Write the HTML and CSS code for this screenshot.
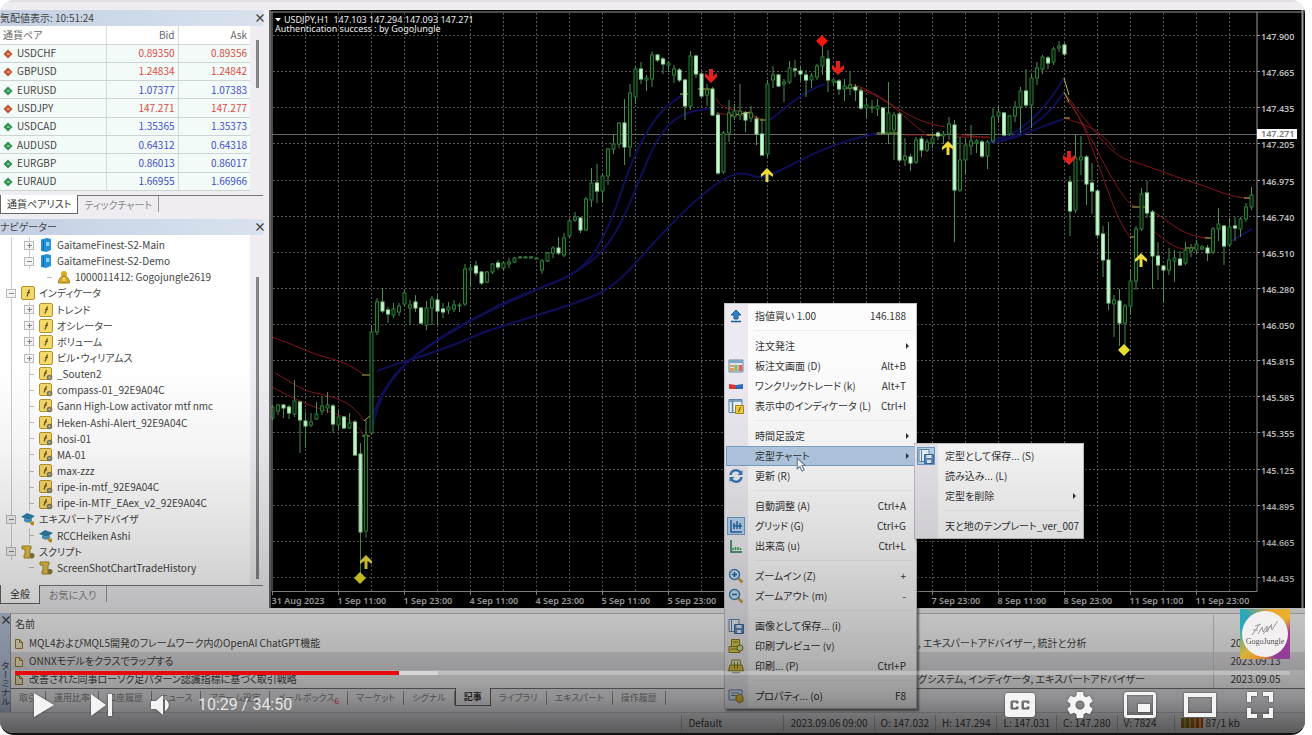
FILE: index.html
```html
<!DOCTYPE html>
<html lang="ja">
<head>
    <meta charset="UTF-8">
    <meta name="viewport" content="width=device-width, initial-scale=1.0">
    <title>USDJPY,H1</title>
    <link rel="stylesheet" href="styles.css">
</head>
<body>
    <svg class="defs" aria-hidden="true">
        <symbol id="i-pair" viewBox="0 0 10 10"><path d="M5 0.5 9.5 5 5 9.5 0.500 5z" fill="currentColor"/><path d="M4 5h3M5 4v2" stroke="#fff" stroke-opacity=".5"/></symbol>
        <symbol id="i-server" viewBox="0 0 14 14"><path d="M2 1.500l6-1.500 4 1v11l-5 2-5-1z" fill="#2490d8"/><path d="M4.500 2.500v10" stroke="#0d5f9f"/><path d="M7 4h3.500v4H7z" fill="#86cdf5"/></symbol>
        <symbol id="i-user" viewBox="0 0 14 14"><circle cx="7" cy="4" r="3" fill="#d9ac22"/><path d="M1.500 13c0-9 11-9 11 0z" fill="#d9ac22" stroke="#9c7a12"/><path d="M6 7h2v4H6z" fill="#f6e27a"/></symbol>
        <symbol id="i-func" viewBox="0 0 14 14"><rect x=".5" y=".5" width="13" height="13" rx="1.500" fill="#f3d96b" stroke="#b8922a"/><path d="M8.500 3.500 6 10.500M6 6.500h3" fill="none" stroke="#6b4a10" stroke-width="1.200"/></symbol>
        <symbol id="i-custom" viewBox="0 0 14 14"><rect x=".5" y=".5" width="12" height="12" rx="1.500" fill="#f3d96b" stroke="#b8922a"/><path d="M7.500 3 5 9.500M5 6h3" fill="none" stroke="#6b4a10" stroke-width="1.200"/><circle cx="10.500" cy="10.500" r="2.800" fill="#7d7758"/><circle cx="10.500" cy="10.500" r="1" fill="#d8d0a0"/></symbol>
        <symbol id="i-expert" viewBox="0 0 14 14"><path d="M0 5 6 1l8 3-6 4z" fill="#2e7fa8"/><path d="M3 6v3c2 2 6 2 8 0V6L8 8z" fill="#4aa0c6"/><path d="M9 10l3 3M12 9.500v3.500" stroke="#c09a20" stroke-width="2"/></symbol>
        <symbol id="i-script" viewBox="0 0 14 14"><path d="M1 1h9v3H9v5h3v4H3v-3h1V4H1z" fill="#e2c04a" stroke="#a98722"/><circle cx="11" cy="10.500" r="2.500" fill="#8d7a3a"/></symbol>
        <symbol id="i-doc" viewBox="0 0 8 10"><path d="M.5.5h4l3 3v6h-7z" fill="#f7edc8" stroke="#a08030"/><path d="M4.500.5v3h3" fill="none" stroke="#a08030"/></symbol>
        <symbol id="i-up" viewBox="0 0 16 16"><path d="M8 2l5 5h-3v4H6V7H3z" fill="#2f7fc4" stroke="#1b5c98"/><path d="M3 13.500h10" stroke="#1b5c98" stroke-width="1.500"/></symbol>
        <symbol id="i-board" viewBox="0 0 16 16"><path d="M1 2h14v12H1z" fill="#d9e4ec" stroke="#6c8aa0"/><path d="M1 2h14v3H1z" fill="#7fa6be"/><path d="M2 7h4v2H2zM2 10h4v3H2z" fill="#e39a5a"/><path d="M6.500 7h3v6h-3z" fill="#7fba6a"/><path d="M10.500 7h4v6h-4z" fill="#d86a60"/></symbol>
        <symbol id="i-oneclick" viewBox="0 0 16 16"><path d="M1 6l7 1v4H1z" fill="#d63838"/><path d="M15 6 8 7v4h7z" fill="#2f6cb8"/></symbol>
        <symbol id="i-list" viewBox="0 0 16 16"><path d="M1 1.500h13v13H1z" fill="#eef4f9" stroke="#5c86ae"/><path d="M1 3h13M4.500 3v11" stroke="#5c86ae" stroke-width="1.500"/><path d="M7.500 7.500h8v8h-8z" fill="#f1cf3c" stroke="#a8861c"/><path d="M12.500 9l-2 5" stroke="#6b4a10"/></symbol>
        <symbol id="i-refresh" viewBox="0 0 16 16"><path d="M2.500 7c.5-5 7-6.500 10-2.500M13.500 9c-.5 5-7 6.500-10 2.500" fill="none" stroke="#3978b4" stroke-width="2.500"/><path d="M14.500 2v5h-5zM1.500 14V9h5z" fill="#3978b4"/></symbol>
        <symbol id="i-grid" viewBox="0 0 16 16"><path d="M3 2v12h11M6 5v6M9 3v8M12 5v6M5 8h9" fill="none" stroke="#2668a5" stroke-width="1.500"/></symbol>
        <symbol id="i-volume" viewBox="0 0 16 16"><path d="M3 2v12h11" fill="none" stroke="#2b7550" stroke-width="1.500"/><path d="M5 12v-2M7.500 12V9M10 12v-3M12.500 12v-2" stroke="#35a04c" stroke-width="1.500"/></symbol>
        <symbol id="i-zoomin" viewBox="0 0 16 16"><path d="M10 10l4.500 4.500" stroke="#c79a3c" stroke-width="2.500"/><circle cx="6.500" cy="6.500" r="5" fill="#cfe6f6" stroke="#3b82b8" stroke-width="1.500"/><path d="M4 6.500h5M6.500 4v5" stroke="#1f619a" stroke-width="1.500"/></symbol>
        <symbol id="i-zoomout" viewBox="0 0 16 16"><path d="M10 10l4.500 4.500" stroke="#c79a3c" stroke-width="2.500"/><circle cx="6.500" cy="6.500" r="5" fill="#cfe6f6" stroke="#3b82b8" stroke-width="1.500"/><path d="M4 6.500h5" stroke="#1f619a" stroke-width="1.500"/></symbol>
        <symbol id="i-save" viewBox="0 0 16 16"><path d="M1 1.500h10v12H1z" fill="#eef4f9" stroke="#5c86ae"/><path d="M3.500 2v11" stroke="#5c86ae"/><path d="M6.500 6.500h9v9h-9z" fill="#5c8fc0" stroke="#3d6a98"/><path d="M8.500 7h5v3h-5zM9 12h4v3H9z" fill="#e3edf6"/></symbol>
        <symbol id="i-preview" viewBox="0 0 16 16"><path d="M3.500 1.500h8v7h-8zM1 8.500h11v6H1z" fill="#e0d052" stroke="#8c7e1c"/><path d="M5 4h5M3 11h6" stroke="#8c7e1c"/><circle cx="12" cy="10" r="3" fill="#d8e4a8" stroke="#7a7020"/></symbol>
        <symbol id="i-print" viewBox="0 0 16 16"><path d="M4 2h8l1 6H3z" fill="#f0ead0" stroke="#8c7e1c"/><path d="M2 7h12l1.500 6H.5z" fill="#d8c63e" stroke="#8c7e1c"/><path d="M4 14.500h8" stroke="#777" stroke-width="1.500"/><path d="M6.500 4v7M9.500 4v7" stroke="#8c7e1c"/></symbol>
        <symbol id="i-props" viewBox="0 0 16 16"><path d="M1 2h13v10H1z" fill="#dbe8f2" stroke="#5c86ae"/><path d="M3 5h8M3 7.500h5" stroke="#5c86ae"/><path d="M8 8l4-2 3 3v4l-4 2-3-3z" fill="#e0bd35" stroke="#96781c"/></symbol>
    </svg>

    <main class="player">
        <div class="toolbar"></div>

        <div class="workspace">
            <aside class="sidebar">
                <section class="panel">
                    <h2 class="panel-title">気配値表示: 10:51:24 <button class="close" aria-label="閉じる">×</button></h2>
                    <div class="panel-body">
                        <table class="quotes">
                            <thead>
                                <tr><th>通貨ペア</th><th>Bid</th><th>Ask</th></tr>
                            </thead>
                            <tbody>
                                <tr class="down"><td><svg><use href="#i-pair"/></svg>USDCHF</td><td>0.89350</td><td>0.89356</td></tr>
                                <tr class="down"><td><svg><use href="#i-pair"/></svg>GBPUSD</td><td>1.24834</td><td>1.24842</td></tr>
                                <tr class="up"><td><svg><use href="#i-pair"/></svg>EURUSD</td><td>1.07377</td><td>1.07383</td></tr>
                                <tr class="down"><td><svg><use href="#i-pair"/></svg>USDJPY</td><td>147.271</td><td>147.277</td></tr>
                                <tr class="up"><td><svg><use href="#i-pair"/></svg>USDCAD</td><td>1.35365</td><td>1.35373</td></tr>
                                <tr class="up"><td><svg><use href="#i-pair"/></svg>AUDUSD</td><td>0.64312</td><td>0.64318</td></tr>
                                <tr class="up"><td><svg><use href="#i-pair"/></svg>EURGBP</td><td>0.86013</td><td>0.86017</td></tr>
                                <tr class="up"><td><svg><use href="#i-pair"/></svg>EURAUD</td><td>1.66955</td><td>1.66966</td></tr>
                            </tbody>
                        </table>
                        <div class="scroll scroll-quotes"></div>
                    </div>
                    <div class="tabs">
                        <button class="tab active">通貨ペアリスト</button>
                        <button class="tab">ティックチャート</button>
                    </div>
                </section>

                <section class="panel navigator">
                    <h2 class="panel-title">ナビゲーター <button class="close" aria-label="閉じる">×</button></h2>
                    <div class="panel-body">
                        <ul class="tree">
                            <li class="l2"><i class="box plus"></i><svg><use href="#i-server"/></svg>GaitameFinest-S2-Main</li>
                            <li class="l2"><i class="box"></i><svg><use href="#i-server"/></svg>GaitameFinest-S2-Demo</li>
                            <li class="l3"><i class="leaf"></i><svg><use href="#i-user"/></svg>1000011412: Gogojungle2619</li>
                            <li class="l1"><i class="box"></i><svg><use href="#i-func"/></svg>インディケータ</li>
                            <li class="l2"><i class="box plus"></i><svg><use href="#i-func"/></svg>トレンド</li>
                            <li class="l2"><i class="box plus"></i><svg><use href="#i-func"/></svg>オシレーター</li>
                            <li class="l2"><i class="box plus"></i><svg><use href="#i-func"/></svg>ボリューム</li>
                            <li class="l2"><i class="box plus"></i><svg><use href="#i-func"/></svg>ビル・ウィリアムス</li>
                            <li class="l2"><i class="leaf"></i><svg><use href="#i-custom"/></svg>_Souten2</li>
                            <li class="l2"><i class="leaf"></i><svg><use href="#i-custom"/></svg>compass-01_92E9A04C</li>
                            <li class="l2"><i class="leaf"></i><svg><use href="#i-custom"/></svg>Gann High-Low activator mtf nmc</li>
                            <li class="l2"><i class="leaf"></i><svg><use href="#i-custom"/></svg>Heken-Ashi-Alert_92E9A04C</li>
                            <li class="l2"><i class="leaf"></i><svg><use href="#i-custom"/></svg>hosi-01</li>
                            <li class="l2"><i class="leaf"></i><svg><use href="#i-custom"/></svg>MA-01</li>
                            <li class="l2"><i class="leaf"></i><svg><use href="#i-custom"/></svg>max-zzz</li>
                            <li class="l2"><i class="leaf"></i><svg><use href="#i-custom"/></svg>ripe-in-mtf_92E9A04C</li>
                            <li class="l2"><i class="leaf"></i><svg><use href="#i-custom"/></svg>ripe-in-MTF_EAex_v2_92E9A04C</li>
                            <li class="l1"><i class="box"></i><svg><use href="#i-expert"/></svg>エキスパートアドバイザ</li>
                            <li class="l2"><i class="leaf"></i><svg><use href="#i-expert"/></svg>RCCHeiken Ashi</li>
                            <li class="l1"><i class="box"></i><svg><use href="#i-script"/></svg>スクリプト</li>
                            <li class="l2 last"><i class="leaf"></i><svg><use href="#i-script"/></svg>ScreenShotChartTradeHistory</li>
                        </ul>
                        <div class="scroll scroll-tree"></div>
                    </div>
                    <div class="tabs">
                        <button class="tab active">全般</button>
                        <button class="tab">お気に入り</button>
                    </div>
                </section>
            </aside>

            <svg class="chart" id="chart" viewBox="271 10 1034 598" role="img" aria-label="USDJPY,H1">
                <rect x="271" y="10" width="1034" height="598" fill="#000"/>
                <g id="grid" class="grid"></g>
                <path class="price-line" d="M272 134.500H1257"/>
                <g class="ma-blue">
                    <path d="M372 431C378 395 392 378 405 365S450 330 475 318 530 292 560 280 600 245 610 222 626 172 640 145 664 105 688 92"/>
                    <path d="M372 417C382 390 395 372 410 360S460 325 500 305 560 285 590 262 630 200 650 155 690 112 715 108"/>
                    <path d="M377 371C400 362 440 352 470 338S570 308 600 293 650 240 700 197 745 185 770 175 820 145 878 133"/>
                    <path d="M770 120C785 108 805 90 825 84"/>
                    <path d="M990 141C1020 136 1045 110 1064 78M990 143C1020 138 1048 118 1064 92M990 143C1020 139 1040 126 1064 119"/>
                    <path d="M1228 243 1252 229"/>
                </g>
                <g class="ma-red">
                    <path d="M272 337C295 345 310 353 325 357S350 364 364 375"/>
                    <path d="M275 373C290 381 300 390 315 393S352 400 364 421"/>
                    <path d="M272 387C285 394 300 402 315 407S355 417 364 436"/>
                    <path d="M716 98C724 115 740 106 760 119M716 113C735 116 748 113 762 120"/>
                    <path d="M850 84C885 92 900 120 945 127M858 89C890 97 905 120 925 133M905 135H945"/>
                    <path d="M955 134 990 138M955 137H990"/>
                    <path d="M1066 95C1090 125 1110 155 1128 160S1170 175 1195 183 1230 198 1250 198"/>
                    <path d="M1068 99C1095 140 1120 205 1137 207M1066 100C1090 120 1110 215 1130 237"/>
                    <path d="M1064 118C1090 126 1100 130 1115 150"/>
                    <path d="M1155 213C1170 222 1185 238 1210 238M1152 230C1165 240 1175 249 1185 249"/>
                </g>
                <g class="ma-yellow">
                    <path d="M362 375h8M364 421l7-6M362 436h8M680 94h8M698 89h12M730 116l20-4M760 120h8M832 81l8 2M845 88h12M877 133h24M927 135h18M1064 78l5 17M1064 92l5 10M1064 118h6M1132 207h14M1130 237h8M1205 238h8M1185 248h12M1244 198h9"/>
                </g>
                <g id="candles"></g>
                <g id="marks"></g>
                <path class="frame" d="M271 12H1302M272 12V591.500H1257V12"/>
                <g id="axis" class="axis"></g>
                <rect x="1257" y="129" width="40" height="10" fill="#fff"/>
                <text class="price-tag" x="1261" y="137">147.271</text>
                <path d="M275 18h6l-3 3.500z" fill="#fff"/>
                <text class="symbol" x="284" y="23">USDJPY,H1&#160; 147.103 147.294 147.093 147.271</text>
                <text class="symbol" x="275" y="32">Authentication success : by GogoJungle</text>
                <path d="M1302.500 10V608" stroke="#999" stroke-width="2"/>
            </svg>
        </div>

        <div class="terminal">
            <div class="grip"><button class="close" aria-label="閉じる">×</button><span>ターミナル</span></div>
            <div class="terminal-main">
                <table class="articles">
                    <thead>
                        <tr><th class="col-name">名前</th><th></th><th class="col-date"></th></tr>
                    </thead>
                    <tbody>
                        <tr><td><svg><use href="#i-doc"/></svg>MQL4およびMQL5開発のフレームワーク内のOpenAI ChatGPT機能</td><td>, エキスパートアドバイザー, 統計と分析</td><td>2023.09.14</td></tr>
                        <tr><td><svg><use href="#i-doc"/></svg>ONNXモデルをクラスでラップする</td><td></td><td>2023.09.13</td></tr>
                        <tr><td><svg><use href="#i-doc"/></svg>改善された同事ローソク足パターン認識指標に基づく取引戦略</td><td>グシステム, インディケータ, エキスパートアドバイザー</td><td>2023.09.05</td></tr>
                    </tbody>
                </table>
                <div class="tabs">
                    <button class="tab">取引</button>
                    <button class="tab">運用比率</button>
                    <button class="tab">口座履歴</button>
                    <button class="tab">ニュース</button>
                    <button class="tab">アラーム設定</button>
                    <button class="tab">メールボックス<sub>6</sub></button>
                    <button class="tab">マーケット</button>
                    <button class="tab">シグナル</button>
                    <button class="tab active">記事</button>
                    <button class="tab">ライブラリ</button>
                    <button class="tab">エキスパート</button>
                    <button class="tab">操作履歴</button>
                </div>
            </div>
        </div>

        <div class="statusbar">
            <span class="profile">Default</span>
            <span>2023.09.06 09:00</span>
            <span>O: 147.032</span>
            <span>H: 147.294</span>
            <span>L: 147.031</span>
            <span>C: 147.280</span>
            <span>V: 7824</span>
            <span class="traffic"><i class="bars"></i>87/1 kb</span>
        </div>

        <div class="menu menu-chart">
            <button><svg><use href="#i-up"/></svg>指値買い 1.00<kbd>146.188</kbd></button>
            <hr>
            <button class="sub">注文発注</button>
            <button><svg><use href="#i-board"/></svg>板注文画面 (D)<kbd>Alt+B</kbd></button>
            <button><svg><use href="#i-oneclick"/></svg>ワンクリックトレード (k)<kbd>Alt+T</kbd></button>
            <button><svg><use href="#i-list"/></svg>表示中のインディケータ (L)<kbd>Ctrl+I</kbd></button>
            <hr>
            <button class="sub">時間足設定</button>
            <button class="sub selected">定型チャート</button>
            <button><svg><use href="#i-refresh"/></svg>更新 (R)</button>
            <hr>
            <button>自動調整 (A)<kbd>Ctrl+A</kbd></button>
            <button><svg class="on"><use href="#i-grid"/></svg>グリッド (G)<kbd>Ctrl+G</kbd></button>
            <button><svg><use href="#i-volume"/></svg>出来高 (u)<kbd>Ctrl+L</kbd></button>
            <hr>
            <button><svg><use href="#i-zoomin"/></svg>ズームイン (Z)<kbd>+</kbd></button>
            <button><svg><use href="#i-zoomout"/></svg>ズームアウト (m)<kbd>-</kbd></button>
            <hr>
            <button><svg><use href="#i-save"/></svg>画像として保存... (i)</button>
            <button><svg><use href="#i-preview"/></svg>印刷プレビュー (v)</button>
            <button><svg><use href="#i-print"/></svg>印刷... (P)<kbd>Ctrl+P</kbd></button>
            <hr>
            <button><svg><use href="#i-props"/></svg>プロパティ... (o)<kbd>F8</kbd></button>
        </div>

        <div class="menu menu-template">
            <button><svg class="on"><use href="#i-save"/></svg>定型として保存... (S)</button>
            <button>読み込み... (L)</button>
            <button class="sub">定型を削除</button>
            <hr>
            <button>天と地のテンプレート_ver_007</button>
        </div>

        <svg class="cursor" viewBox="0 0 10 14"><path d="M1 1v10l2.500-2 2 4 2-1-2-4h3z" fill="#fff" stroke="#6d8296"/></svg>

        <div class="shade"></div>

        <div class="watermark">
            <div class="disc">
                <svg viewBox="0 0 30 16"><path d="M2 14 9 4M5 5l6-2M8 13l4-7 1 5 4-6 0 6 4-7 1 5 6-10M3 9h5M13 13l9-10" fill="none" stroke="#999"/></svg>
                <span>GogoJungle</span>
            </div>
        </div>

        <div class="player-ui">
            <input class="seek" type="range" min="0" max="2090" value="629" aria-label="Seek">
            <div class="controls">
                <button class="left" aria-label="Play"><svg width="20" height="24" viewBox="0 0 20 24"><path d="M0 0 20 12 0 24z"/></svg></button>
                <button class="left" aria-label="Next"><svg width="22" height="22" viewBox="0 0 22 22"><path d="M0 0 15 11 0 22zM17 0h4v22h-4z"/></svg></button>
                <button class="left" aria-label="Mute"><svg width="20" height="20" viewBox="0 0 20 20"><path d="M1 6h5l7-6v20l-7-6H1zM15 4c5 3 5 9 0 12z"/></svg></button>
                <span class="time">10:29 / 34:50</span>
                <button aria-label="Subtitles"><svg width="30" height="24" viewBox="0 0 30 24"><path fill-rule="evenodd" d="M3 0h24q3 0 3 3v18q0 3-3 3H3q-3 0-3-3V3q0-3 3-3zM7 7.500q-1.500 0-1.500 1.500v6q0 1.500 1.500 1.500h5q1.500 0 1.500-1.500v-1.500h-2.500v1H8v-5h3v1h2.500V9q0-1.500-1.500-1.500zM18 7.500q-1.500 0-1.500 1.500v6q0 1.500 1.500 1.500h5q1.500 0 1.500-1.500v-1.500H22v1h-3v-5h3v1h2.500V9q0-1.500-1.500-1.500z"/></svg></button>
                <button aria-label="Settings"><svg width="26" height="26" viewBox="2 2 20 20"><path d="M19.430 12.980c.04-.32.07-.64.07-.98s-.03-.66-.07-.98l2.110-1.650c.19-.15.24-.42.12-.64l-2-3.460c-.12-.22-.39-.3-.61-.22l-2.490 1c-.52-.4-1.080-.73-1.690-.98l-.38-2.650C14.460 2.180 14.250 2 14 2h-4c-.25 0-.46.18-.49.42l-.38 2.650c-.61.25-1.170.59-1.690.98l-2.490-1c-.23-.09-.49 0-.61.22l-2 3.460c-.13.22-.07.49.12.64l2.110 1.650c-.04.32-.07.65-.07.98s.03.66.07.98l-2.110 1.650c-.19.15-.24.42-.12.64l2 3.460c.12.22.39.3.61.22l2.490-1c.52.4 1.080.73 1.690.98l.38 2.650c.03.24.24.42.49.42h4c.25 0 .46-.18.49-.42l.38-2.650c.61-.25 1.170-.59 1.690-.98l2.490 1c.23.09.49 0 .61-.22l2-3.460c.12-.22.07-.49-.12-.64zM12 15.500c-1.930 0-3.500-1.570-3.500-3.500s1.570-3.500 3.500-3.500 3.500 1.570 3.500 3.500-1.570 3.500-3.500 3.500z"/></svg></button>
                <button aria-label="Miniplayer"><svg width="32" height="26" viewBox="0 0 32 26"><path fill-rule="evenodd" d="M3 0h26q3 0 3 3v20q0 3-3 3H3q-3 0-3-3V3q0-3 3-3zM3 3v20h26V3zM14 12h12v8H14z"/></svg></button>
                <button aria-label="Theater mode"><svg width="32" height="24" viewBox="0 0 32 24"><path fill-rule="evenodd" d="M0 0h32v24H0zM4 4v16h24V4z"/></svg></button>
                <button aria-label="Full screen"><svg width="26" height="26" viewBox="0 0 26 26"><path d="M0 0h10v4H4v6H0zM16 0h10v10h-4V4h-6zM0 16h4v6h6v4H0zM22 16h4v10H16v-4h6z"/></svg></button>
            </div>
        </div>
    </main>

    <script src="script.js"></script>
</body>
</html>
```
FILE: styles.css
```css
* { box-sizing: border-box; }
body { margin: 0; background-color: #fff; color: #444; font-family: "Noto Sans CJK JP", sans-serif; font-size: 10px; line-height: 16px; font-feature-settings: "palt"; }
button { font: inherit; font-feature-settings: inherit; color: inherit; border: none; background: none; padding: 0; cursor: pointer; }
h2, ul { margin: 0; padding: 0; font-weight: normal; font-size: 10px; }
table { border-collapse: collapse; table-layout: fixed; }
.defs { position: absolute; width: 0; height: 0; }

.player { position: relative; display: flex; flex-direction: column; min-height: 100vh; margin-right: 7px; overflow: hidden; border-radius: 14px; border-bottom: 2px solid #111; background-color: #eceaee; }
.toolbar { height: 10px; background-color: #efedf0; border-top: 2px solid #e0dfe2; }
.workspace { display: grid; grid-template-columns: 271px 1fr; }

/* Left side: quotes and navigator */
.sidebar { display: flex; flex-direction: column; min-height: 0; padding-right: 6px; border-right: 2px solid #666; background-color: #efedf1; }
.panel-title { display: flex; justify-content: space-between; height: 16px; line-height: 16px; background: linear-gradient(to right, #c3cfe2, #d9e3ef); }
.close { width: 9px; font-size: 12px; font-weight: bold; line-height: 14px; }
.panel-body { display: flex; }
.quotes { width: 250px; height: 165px; margin-bottom: 4px; background-color: #f3fbf8; }
.quotes th, .quotes td { height: 18px; padding: 0 3px; line-height: 16px; border-bottom: 1px solid #cdd5d3; border-right: 1px solid #d5dbda; text-align: right; }
.quotes th { background-color: #fff; font-weight: normal; color: #666; }
.quotes th:first-child, .quotes td:first-child { width: 106px; text-align: left; }
.quotes th:last-child, .quotes td:last-child { border-right: none; }
.quotes svg { width: 10px; height: 10px; margin-right: 4px; vertical-align: -2px; }
.quotes .down svg { color: #c4512f; }
.quotes .up svg { color: #2f9152; }
.quotes .down td + td { color: #e04a42; }
.quotes .up td + td { color: #3f4ccc; }
.scroll { width: 3px; margin-left: 6px; background-color: #858588; }
.scroll-quotes { height: 48px; margin-top: 14px; }
.scroll-tree { margin-top: 42px; margin-bottom: 6px; }
.tabs { display: flex; height: 18px; border-top: 1px solid #777; }
.tab { padding: 0 8px; line-height: 14px; color: #888; border-right: 1px solid #999; }
.tabs .tab { height: 14px; }
.tabs .tab.active { height: 18px; margin-top: -1px; line-height: 17px; color: #333; background-color: #fff; border: 1px solid #666; border-top: none; }
.sidebar .tabs .tab { height: 16px; padding: 0 6px; line-height: 18px; }
.sidebar .tabs .tab.active { height: 19px; }
.navigator { display: flex; flex-direction: column; flex: 1; margin-top: 6px; padding-bottom: 5px; }
.navigator .panel-body { flex: 1; }
.sidebar .navigator .tabs .tab { padding: 0 9px; }
.tree { display: grid; grid-auto-rows: 1fr; width: 250px; padding-top: 2px; padding-bottom: 9px; background-color: #fff; list-style: none; }
.tree li { display: flex; align-items: center; white-space: nowrap; background: linear-gradient(#ccc, #ccc) 11px 0 / 1px 100% no-repeat; }
.tree .l1 { padding-left: 6px; }
.tree .l2 { padding-left: 24px; background: linear-gradient(#ccc, #ccc) 11px 0 / 1px 100% no-repeat, linear-gradient(#ccc, #ccc) 29px 0 / 1px 100% no-repeat; }
.tree .l3 { padding-left: 42px; }
.tree .last { background: none; }
.tree svg { width: 14px; height: 14px; margin: 0 4px 0 5px; }
.box { width: 10px; height: 9px; border: 1px solid #bbb; background: linear-gradient(#888, #888) 50% 50% / 5px 1px no-repeat #f4f4f4; }
.box.plus { background: linear-gradient(#888, #888) 50% 50% / 5px 1px no-repeat, linear-gradient(#888, #888) 50% 50% / 1px 5px no-repeat #f4f4f4; }
.leaf { width: 5px; height: 1px; margin-left: 5px; background-color: #bbb; }

/* Chart */
.chart { display: block; width: 100%; height: auto; font-family: "Noto Sans", sans-serif; font-size: 9px; font-weight: 600; }
.grid path { stroke: #585858; stroke-dasharray: 2 2; fill: none; }
.price-line { stroke: #666; }
.frame { fill: none; stroke: #999; }
.axis path { stroke: #999; }
.axis text { fill: #bbb; }
.symbol { fill: #eee; font-family: "Noto Sans", sans-serif; font-weight: normal; }
.price-tag { fill: #777; }
.ma-blue path { fill: none; stroke: #0f0f58; stroke-width: 2; }
.ma-red path { fill: none; stroke: #84161b; }
.ma-yellow path { fill: none; stroke: #b4b444; }
.candle-wick { stroke: #4b8f52; }
.candle-up { fill: #001a04; stroke: #2f7d38; }
.candle-down { fill: #c9f7cf; stroke: #8fd79a; }

/* Terminal */
.terminal { display: flex; margin-top: 5px; background-color: #f1eff3; }
.grip { display: flex; flex-direction: column; width: 11px; background-color: #b9c4dc; border-right: 1px solid #999; }
.grip span { margin-top: 34px; font-size: 9px; line-height: 10px; writing-mode: vertical-rl; white-space: nowrap; color: #445; }
.terminal-main { flex: 1; min-width: 0; }
.articles { width: 100%; background-color: #fafafa; border-top: 1px solid #bbb; }
.articles th, .articles td { height: 18px; padding: 0 4px; line-height: 18px; text-align: left; font-weight: normal; white-space: nowrap; }
.articles th { height: 20px; line-height: 20px; }
.articles .col-name { width: 903px; }
.articles .col-date { width: 92px; }
.articles th:last-child, .articles td:last-child { padding-left: 17px; border-left: 1px solid #ccc; }
.articles tbody tr:nth-child(2) { background-color: #e0dee2; }
.articles svg { width: 8px; height: 10px; margin-right: 6px; vertical-align: -2px; }
.terminal .tabs { height: 24px; }
.terminal .tab { padding: 0 8px; margin-top: 2px; font-size: 9px; white-space: nowrap; }
.terminal .tabs .tab.active { padding: 0 8px; font-weight: bold; background-color: #f5f3f6; }
.tab sub { color: #d33; font-size: 8px; line-height: 8px; }

.statusbar { display: flex; flex: 1; align-items: center; justify-content: flex-end; padding-right: 59px; border-top: 1px solid #ccc; }
.statusbar span { padding: 0 6px; border-left: 1px solid #bbb; white-space: nowrap; }
.statusbar .profile { width: 102px; }
.statusbar .traffic { margin-left: 12px; }
.bars { display: inline-block; width: 22px; height: 10px; margin-right: 2px; vertical-align: -1px; background: linear-gradient(to right, rgba(90,140,60,0.6), transparent), repeating-linear-gradient(to right, #d0482c 0, #d0482c 3px, #e8c23a 3px, #e8c23a 5px); }

/* Context menus */
.menu { position: absolute; display: flex; flex-direction: column; padding: 2px 1px; color: #333; border: 1px solid #c4c4c8; background: linear-gradient(to right, #eceaf0 23px, #fcfcfd 23px); box-shadow: 2px 2px 2px rgba(0,0,0,0.5); }
.menu button { position: relative; display: flex; align-items: center; height: 20px; padding: 0 9px 0 29px; text-align: left; white-space: nowrap; }
.menu button svg { position: absolute; left: 2px; top: 2px; width: 16px; height: 16px; }
.menu button svg.on { outline: 1px solid #6e9cc8; background-color: #b8d4ee; }
.menu kbd { margin-left: auto; font: inherit; }
.menu hr { width: calc(100% - 30px); height: 1px; margin: 4px 0 5px 28px; border: none; background-color: #efeff2; }
.menu .sub::after { content: ""; margin-left: auto; margin-right: -3px; border: 3px solid transparent; border-left-color: #333; border-right: none; }
.menu .selected { background-color: #b5cce6; outline: 1px solid #7fa3c6; outline-offset: -1px; }
.menu-chart { left: 724px; top: 303px; width: 193px; }
.menu-template { left: 914px; top: 443px; width: 170px; }
.cursor { position: absolute; left: 796px; top: 457px; width: 11px; height: 15px; }

/* Video player overlay */
.shade { position: absolute; inset: 0; pointer-events: none; background: linear-gradient(to top, rgba(0,0,0,0.62) 0, rgba(0,0,0,0.4) 36px, rgba(0,0,0,0.29) 75px, rgba(0,0,0,0.21) 125px, rgba(0,0,0,0.13) 190px, rgba(0,0,0,0.04) 290px, transparent 370px); }
.watermark { position: absolute; right: 15px; bottom: 74px; width: 50px; height: 50px; padding: 2px; background: conic-gradient(from 315deg, #2aa7b8, #f0a32c 60deg, #e8b12e 100deg, #a23a95 130deg, #8f3c9b 200deg, #e8882a 230deg, #d8b23a 270deg, #2aa7b8 330deg); }
.disc { display: flex; flex-direction: column; align-items: center; justify-content: center; height: 46px; border-radius: 50%; background-color: #f3f0f2; }
.disc svg { width: 30px; height: 16px; }
.disc span { font-family: "Liberation Serif", serif; font-size: 8px; line-height: 10px; color: #555; }
.player-ui { position: absolute; left: 15px; right: 15px; bottom: 0; }
.seek { display: block; appearance: none; width: 100%; height: 4px; margin: 0; background: linear-gradient(to right, #e8090c 30.1%, #d8d6d8 30.1%, #d8d6d8 33.2%, rgba(255,255,255,0.25) 33.2%); }
.seek::-webkit-slider-thumb { appearance: none; width: 0; height: 0; }
.controls { display: flex; align-items: center; height: 58px; padding-top: 2px; }
.controls button { display: flex; align-items: center; justify-content: center; width: 60px; height: 48px; }
.controls .left { width: 58px; }
.controls svg { fill: #f4f4f4; filter: drop-shadow(0 0 1px rgba(0,0,0,0.5)); }
.time { margin-left: 9px; margin-right: auto; font-family: Roboto, sans-serif; font-size: 16px; color: #e4e4e4; }
```
FILE: script.js
```js
const NS = 'http://www.w3.org/2000/svg';
const firstX = 272.5;
const step = 5.5;

// high, body top, body bottom, low, 1 = falling candle
const candles = [
    [405,407,418,420,0],[404,405,411,415,0],[404,405,408,418,1],[405,407,413,419,1],[380,401,414,417,0],[401,402,420,453,1],
    [412,421,426,448,1],[413,422,425,427,0],[402,414,419,420,0],[397,406,411,415,0],[392,405,408,413,0],[404,406,424,433,1],
    [410,417,425,430,0],[416,417,428,429,1],[413,423,428,429,0],[420,422,455,456,1],[443,454,532,574,1],[420,435,531,538,0],
    [325,332,433,435,0],[298,302,332,335,0],[288,302,311,313,1],[307,310,314,323,1],[303,309,315,318,0],[303,306,312,316,0],
    [289,293,304,307,0],[300,305,308,325,0],[295,302,308,312,1],[307,308,323,324,1],[301,308,325,330,0],[296,299,308,325,0],
    [295,300,311,325,1],[303,309,312,318,1],[302,307,310,314,0],[300,305,309,312,0],[303,305,306,312,0],[264,269,304,306,0],
    [264,268,270,287,0],[261,266,273,276,1],[271,272,283,285,1],[271,272,282,283,0],[263,264,272,274,0],[260,263,267,270,1],
    [261,263,268,271,0],[258,262,264,268,0],[257,258,262,263,0],[256,257,258,258,0],[256,257,258,258,0],[256,257,258,258,0],
    [257,258,259,259,0],[259,261,270,274,0],[252,253,261,262,0],[246,248,253,258,0],[237,248,253,255,1],[233,238,255,257,0],
    [219,221,236,238,0],[212,217,220,222,0],[217,218,230,233,1],[197,199,230,231,0],[168,183,200,207,0],[164,183,191,203,1],
    [173,176,191,202,0],[148,149,176,185,0],[135,144,149,154,0],[122,123,144,148,0],[99,123,147,165,1],[84,93,147,157,0],
    [66,69,97,104,0],[62,69,79,84,1],[75,78,80,91,0],[51,55,79,87,0],[54,55,60,62,1],[57,59,64,74,1],
    [61,63,65,72,0],[65,69,75,83,0],[68,70,80,82,1],[79,80,106,120,1],[51,56,106,110,0],[55,56,74,78,1],
    [72,74,96,98,1],[84,90,95,106,0],[87,89,115,116,1],[112,115,173,175,1],[131,133,172,174,0],[100,113,133,142,0],
    [104,111,117,120,0],[84,111,115,120,0],[111,113,120,132,1],[106,113,118,122,0],[116,119,134,145,1],[118,134,155,156,1],
    [80,84,154,157,0],[66,75,80,88,0],[74,75,86,87,1],[79,82,84,102,0],[61,68,82,84,0],[60,69,70,77,1],
    [67,71,74,81,1],[70,75,80,97,1],[73,76,80,88,0],[64,66,77,80,0],[45,57,66,75,0],[50,59,80,92,1],
    [79,80,82,85,0],[79,81,89,95,1],[79,86,89,101,0],[71,85,88,95,0],[84,87,90,101,1],[88,91,108,110,1],
    [98,105,108,118,0],[100,107,108,113,0],[99,106,109,116,0],[107,108,133,135,1],[82,113,133,144,0],[112,115,130,160,0],
    [112,114,160,162,1],[138,156,160,166,0],[154,157,163,171,1],[137,140,162,164,0],[136,139,150,157,1],[139,142,150,152,0],
    [132,138,143,148,0],[131,133,136,140,1],[131,134,136,144,0],[117,124,134,140,0],[120,125,190,242,1],[137,160,190,192,0],
    [139,145,160,175,0],[125,141,146,155,0],[139,141,143,153,0],[140,142,156,158,1],[140,142,156,169,0],[108,117,141,143,0],
    [106,112,116,122,0],[112,113,135,136,1],[115,116,134,136,0],[101,107,116,122,0],[87,91,107,133,0],[69,91,105,107,1],
    [73,78,105,128,0],[62,68,78,85,0],[55,57,69,74,0],[56,58,63,69,1],[47,49,62,65,0],[41,46,48,52,0],
    [43,45,54,56,1],[176,182,211,236,1],[135,158,210,213,0],[136,157,160,175,0],[155,157,184,205,1],[163,183,191,214,1],
    [190,191,235,238,1],[226,234,260,277,1],[222,260,303,310,1],[295,300,304,337,0],[289,301,323,346,1],[304,306,323,346,0],
    [270,281,306,313,0],[226,229,281,290,0],[188,194,229,231,0],[181,193,213,218,1],[210,212,256,289,1],[242,256,265,280,1],
    [265,266,270,303,1],[248,260,270,275,0],[250,258,261,282,0],[251,259,265,266,1],[242,250,263,265,0],[244,248,251,257,0],
    [240,244,250,255,0],[245,247,249,250,0],[245,248,253,261,1],[227,229,252,254,0],[208,224,229,241,0],[225,226,246,265,1],
    [218,227,245,247,0],[217,226,228,241,1],[217,219,229,237,0],[203,207,219,222,0],[187,195,207,210,0]
];

const prices = ['147.900', '147.665', '147.435', '147.205', '146.975', '146.740', '146.510', '146.280',
    '146.050', '145.815', '145.585', '145.355', '145.125', '144.895', '144.665', '144.435'];
const times = ['31 Aug 2023', '1 Sep 11:00', '1 Sep 23:00', '4 Sep 11:00', '4 Sep 23:00', '5 Sep 11:00', '5 Sep 23:00',
    '6 Sep 11:00', '6 Sep 23:00', '7 Sep 11:00', '7 Sep 23:00', '8 Sep 11:00', '8 Sep 23:00', '11 Sep 11:00', '11 Sep 23:00'];

const marks = [
    ['down', 711, 76], ['down', 838, 68], ['down', 1069, 158],
    ['up', 366, 562], ['up', 767, 175], ['up', 948, 148], ['up', 1141, 260],
    ['top', 822, 41], ['bottom', 360, 578], ['bottom', 1124, 350]
];
const shapes = {
    down: ['M0 7L-6 1V-3L-2 0V-7H2V0L6-3V1Z', '#e0201a'],
    up: ['M0-7L6-1V2L1.500-1V7H-1.500V-1L-6 2V-1Z', '#ecd93a'],
    top: ['M0-6L6 0L0 6L-6 0Z', '#f0180e'],
    bottom: ['M0-6L6 0L0 6L-6 0Z', '#e6e02c']
};

function add(parent, name, attrs, text) {
    const el = document.createElementNS(NS, name);
    Object.entries(attrs).forEach(([key, value]) => el.setAttribute(key, value));
    if (text) el.textContent = text;
    parent.appendChild(el);
    return el;
}

function drawGrid() {
    const grid = document.getElementById('grid');
    const axis = document.getElementById('axis');
    for (let x = 305.5; x < 1250; x += 33) {
        add(grid, 'path', { d: `M${x} 13V591` });
    }
    prices.forEach((price, i) => {
        const y = Math.round(36 + i * 36.13) - 0.5;
        add(grid, 'path', { d: `M273 ${y}H1257` });
        add(axis, 'path', { d: `M1257 ${y}h3` });
        add(axis, 'text', { x: 1261, y: y + 4 }, price);
    });
    times.forEach((time, i) => {
        const x = 272.5 + i * 66;
        add(axis, 'path', { d: `M${x} 592v3` });
        add(axis, 'text', { x: x - 1, y: 604 }, time);
    });
}

function drawCandles() {
    const group = document.getElementById('candles');
    candles.forEach(([high, top, bottom, low, falling], i) => {
        const x = firstX + i * step;
        add(group, 'path', { class: 'candle-wick', d: `M${x} ${high}V${low}` });
        add(group, 'rect', { class: falling ? 'candle-down' : 'candle-up', x: x - 1.5, y: top, width: 3, height: bottom - top });
    });
}

function drawMarks() {
    const group = document.getElementById('marks');
    marks.forEach(([type, x, y]) => {
        const [d, fill] = shapes[type];
        add(group, 'path', { d, fill, transform: `translate(${x} ${y})` });
    });
}

drawGrid();
drawCandles();
drawMarks();
```
